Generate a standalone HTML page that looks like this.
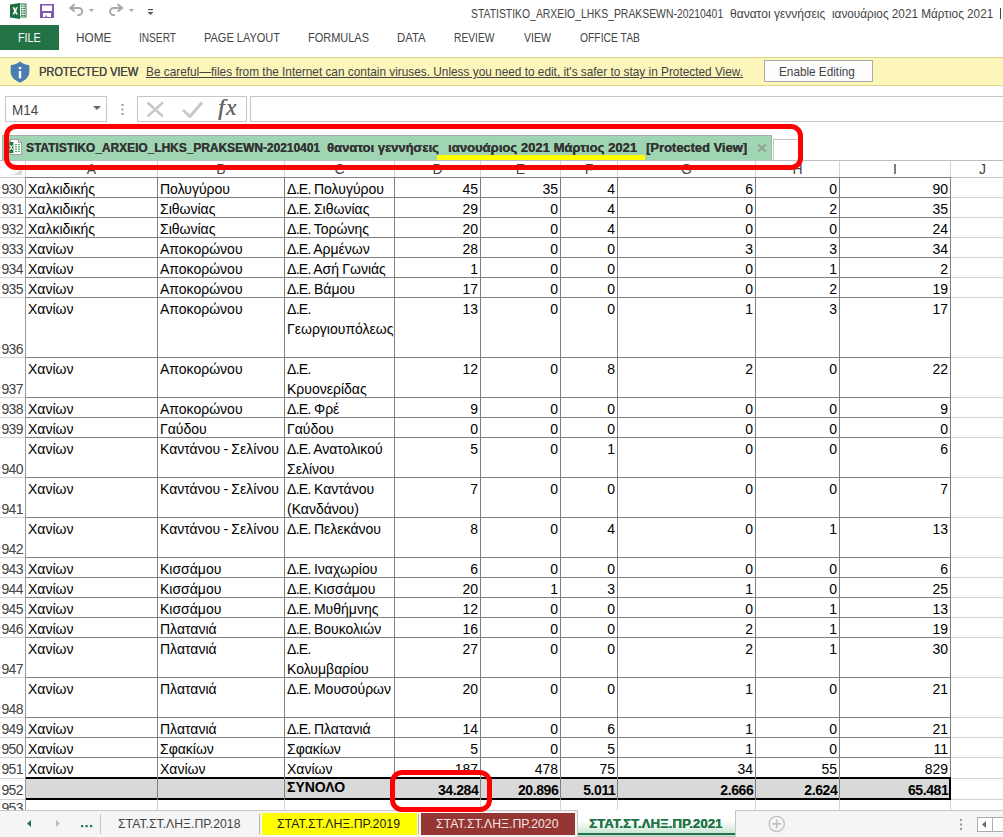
<!DOCTYPE html>
<html><head><meta charset="utf-8">
<style>
*{margin:0;padding:0;box-sizing:border-box}
html,body{width:1003px;height:837px;overflow:hidden;background:#fff;font-family:"Liberation Sans",sans-serif}
body{position:relative}
.a{position:absolute;white-space:pre}
.c{position:absolute;font-size:14px;color:#000;white-space:pre;line-height:20px;word-spacing:-0.6px}
.n{position:absolute;font-size:14px;color:#000;white-space:pre;line-height:20px;text-align:right}
.rh{position:absolute;font-size:14px;color:#444;left:0;width:23px;text-align:right;line-height:14px;letter-spacing:-0.6px}
.ch{position:absolute;font-size:14px;color:#444;top:162px;text-align:center;line-height:14px}
</style></head><body>

<svg class="a" style="left:10px;top:3px" width="17" height="16" viewBox="0 0 17 16">
<rect x="9.5" y="1" width="6.5" height="13" fill="#fff" stroke="#1d6f42" stroke-width="1"/>
<g fill="#1d6f42"><rect x="11" y="2.5" width="1.6" height="1.3"/><rect x="13.3" y="2.5" width="1.6" height="1.3"/><rect x="11" y="4.8" width="1.6" height="1.3"/><rect x="13.3" y="4.8" width="1.6" height="1.3"/><rect x="11" y="7.1" width="1.6" height="1.3"/><rect x="13.3" y="7.1" width="1.6" height="1.3"/><rect x="11" y="9.4" width="1.6" height="1.3"/><rect x="13.3" y="9.4" width="1.6" height="1.3"/><rect x="11" y="11.7" width="1.6" height="1.3"/><rect x="13.3" y="11.7" width="1.6" height="1.3"/></g>
<polygon points="0,1.5 10,0 10,16 0,14.5" fill="#1d6f42"/>
<path d="M2.6,4.2 H4.4 L5.2,6.4 L6,4.2 H7.8 L6.2,7.9 L7.9,11.6 H6.1 L5.2,9.4 L4.3,11.6 H2.5 L4.2,7.9Z" fill="#fff"/>
</svg>
<svg class="a" style="left:40px;top:4px" width="15" height="15" viewBox="0 0 15 15">
<path d="M0,0H14V14H0Z M2,1.5V7H12V1.5Z M3,9V13H5.5V11.5H7V13H11V9Z" fill="#8256b4" fill-rule="evenodd"/>
</svg>
<svg class="a" style="left:68px;top:3px" width="90" height="16" viewBox="0 0 90 16">
<g fill="none" stroke="#a8a8a8" stroke-width="2" stroke-linecap="butt">
<path d="M2.5,4.9 H10.6 A3.6,3.6 0 0 1 10.6,12.1 H9.4"/>
<path d="M6.7,1.2 L2.2,4.9 L6.7,8.6"/>
<path d="M53.8,4.9 H45.7 A3.6,3.6 0 0 0 45.7,12.1 H46.9"/>
<path d="M49.6,1.2 L54.1,4.9 L49.6,8.6"/>
</g>
<polygon points="21,6 26,6 23.5,9" fill="#a6a6a6"/>
<polygon points="61,6 66,6 63.5,9" fill="#a6a6a6"/>
<rect x="80" y="6" width="5" height="1.2" fill="#555"/>
<polygon points="79.5,9 85.5,9 82.5,12" fill="#555"/>
</svg>
<div class="a" style="left:1000px;top:8px;width:1px;height:11px;background:#444"></div>
<div class="a" style="left:0;top:25px;width:59px;height:25px;background:#217346"></div>
<div class="a" style="left:0;top:57px;width:1003px;height:29px;background:#fcf6bb;border-top:1px solid #dcd68c;border-bottom:1px solid #dcd68c"></div>
<svg class="a" style="left:10px;top:61px" width="20" height="22" viewBox="0 0 20 22">
<path d="M10,0.5 C7.5,2.5 4,4 0.7,4.3 V11 C0.7,16 5,19.5 10,21.7 C15,19.5 19.3,16 19.3,11 V4.3 C16,4 12.5,2.5 10,0.5Z" fill="#4a7db4"/>
<rect x="8.8" y="6" width="2.4" height="2.2" fill="#fff"/>
<rect x="8.8" y="10" width="2.4" height="7.3" fill="#fff"/>
</svg>
<div class="a" style="left:764px;top:60px;width:109px;height:22px;background:#fdfdfd;border:1px solid #ababab"></div>
<div class="a" style="left:5px;top:96px;width:102px;height:26px;border:1px solid #c6c6c6;background:#fff"></div>
<svg class="a" style="left:93px;top:106px" width="8" height="4"><polygon points="0,0 8,0 4,4" fill="#666"/></svg>
<svg class="a" style="left:121px;top:104px" width="3" height="11"><rect x="0.5" y="0" width="2" height="2" fill="#999"/><rect x="0.5" y="4.5" width="2" height="2" fill="#999"/><rect x="0.5" y="9" width="2" height="2" fill="#999"/></svg>
<div class="a" style="left:137px;top:96px;width:110px;height:26px;border:1px solid #c6c6c6;background:#fff"></div>
<svg class="a" style="left:146px;top:101px" width="60" height="17" viewBox="0 0 60 17">
<path d="M1.5,1.5 L17,15.5 M17,1.5 L1.5,15.5" stroke="#c8c8c8" stroke-width="2.4" fill="none"/>
<path d="M37,9 L44,15.5 L56,1.5" stroke="#c8c8c8" stroke-width="3" fill="none"/>
</svg>
<div class="a" style="left:218px;top:97px;font-family:'Liberation Serif',serif;font-style:italic;font-weight:normal;font-size:23px;line-height:22px;color:#666;letter-spacing:1.5px;text-shadow:0.4px 0 0 #666">fx</div>
<div class="a" style="left:250px;top:96px;width:760px;height:26px;border:1px solid #c6c6c6;background:#fff"></div>
<div class="ch" style="left:26px;width:131px">A</div>
<div class="ch" style="left:158px;width:126px">B</div>
<div class="ch" style="left:285px;width:109px">C</div>
<div class="ch" style="left:395px;width:85px">D</div>
<div class="ch" style="left:481px;width:79px">E</div>
<div class="ch" style="left:561px;width:56px">F</div>
<div class="ch" style="left:618px;width:137px">G</div>
<div class="ch" style="left:756px;width:83px">H</div>
<div class="ch" style="left:840px;width:110px">I</div>
<div class="ch" style="left:951px;width:63px">J</div>
<div class="a" style="left:25px;top:161px;width:1px;height:16px;background:#d4d4d4"></div>
<div class="a" style="left:157px;top:161px;width:1px;height:16px;background:#d4d4d4"></div>
<div class="a" style="left:284px;top:161px;width:1px;height:16px;background:#d4d4d4"></div>
<div class="a" style="left:394px;top:161px;width:1px;height:16px;background:#d4d4d4"></div>
<div class="a" style="left:480px;top:161px;width:1px;height:16px;background:#d4d4d4"></div>
<div class="a" style="left:560px;top:161px;width:1px;height:16px;background:#d4d4d4"></div>
<div class="a" style="left:617px;top:161px;width:1px;height:16px;background:#d4d4d4"></div>
<div class="a" style="left:755px;top:161px;width:1px;height:16px;background:#d4d4d4"></div>
<div class="a" style="left:839px;top:161px;width:1px;height:16px;background:#d4d4d4"></div>
<div class="a" style="left:950px;top:161px;width:1px;height:16px;background:#d4d4d4"></div>
<div class="a" style="left:0;top:177px;width:1003px;height:1px;background:#c6c6c6"></div>
<div class="rh" style="top:182px">930</div>
<div class="a" style="left:0;top:197px;width:25px;height:1px;background:#d4d4d4"></div>
<div class="c" style="left:28px;top:179px">Χαλκιδικής</div>
<div class="c" style="left:160px;top:179px">Πολυγύρου</div>
<div class="c" style="left:287px;top:179px"><span style="letter-spacing:-0.7px">Δ.Ε.</span> Πολυγύρου</div>
<div class="n" style="left:394px;width:84px;top:179px">45</div>
<div class="n" style="left:480px;width:78px;top:179px">35</div>
<div class="n" style="left:560px;width:55px;top:179px">4</div>
<div class="n" style="left:617px;width:136px;top:179px">6</div>
<div class="n" style="left:755px;width:82px;top:179px">0</div>
<div class="n" style="left:839px;width:109px;top:179px">90</div>
<div class="a" style="left:950px;top:197px;width:53px;height:1px;background:#d4d4d4"></div>
<div class="rh" style="top:202px">931</div>
<div class="a" style="left:0;top:217px;width:25px;height:1px;background:#d4d4d4"></div>
<div class="c" style="left:28px;top:199px">Χαλκιδικής</div>
<div class="c" style="left:160px;top:199px">Σιθωνίας</div>
<div class="c" style="left:287px;top:199px"><span style="letter-spacing:-0.7px">Δ.Ε.</span> Σιθωνίας</div>
<div class="n" style="left:394px;width:84px;top:199px">29</div>
<div class="n" style="left:480px;width:78px;top:199px">0</div>
<div class="n" style="left:560px;width:55px;top:199px">4</div>
<div class="n" style="left:617px;width:136px;top:199px">0</div>
<div class="n" style="left:755px;width:82px;top:199px">2</div>
<div class="n" style="left:839px;width:109px;top:199px">35</div>
<div class="a" style="left:950px;top:217px;width:53px;height:1px;background:#d4d4d4"></div>
<div class="rh" style="top:222px">932</div>
<div class="a" style="left:0;top:237px;width:25px;height:1px;background:#d4d4d4"></div>
<div class="c" style="left:28px;top:219px">Χαλκιδικής</div>
<div class="c" style="left:160px;top:219px">Σιθωνίας</div>
<div class="c" style="left:287px;top:219px"><span style="letter-spacing:-0.7px">Δ.Ε.</span> Τορώνης</div>
<div class="n" style="left:394px;width:84px;top:219px">20</div>
<div class="n" style="left:480px;width:78px;top:219px">0</div>
<div class="n" style="left:560px;width:55px;top:219px">4</div>
<div class="n" style="left:617px;width:136px;top:219px">0</div>
<div class="n" style="left:755px;width:82px;top:219px">0</div>
<div class="n" style="left:839px;width:109px;top:219px">24</div>
<div class="a" style="left:950px;top:237px;width:53px;height:1px;background:#d4d4d4"></div>
<div class="rh" style="top:242px">933</div>
<div class="a" style="left:0;top:257px;width:25px;height:1px;background:#d4d4d4"></div>
<div class="c" style="left:28px;top:239px">Χανίων</div>
<div class="c" style="left:160px;top:239px">Αποκορώνου</div>
<div class="c" style="left:287px;top:239px"><span style="letter-spacing:-0.7px">Δ.Ε.</span> Αρμένων</div>
<div class="n" style="left:394px;width:84px;top:239px">28</div>
<div class="n" style="left:480px;width:78px;top:239px">0</div>
<div class="n" style="left:560px;width:55px;top:239px">0</div>
<div class="n" style="left:617px;width:136px;top:239px">3</div>
<div class="n" style="left:755px;width:82px;top:239px">3</div>
<div class="n" style="left:839px;width:109px;top:239px">34</div>
<div class="a" style="left:950px;top:257px;width:53px;height:1px;background:#d4d4d4"></div>
<div class="rh" style="top:262px">934</div>
<div class="a" style="left:0;top:277px;width:25px;height:1px;background:#d4d4d4"></div>
<div class="c" style="left:28px;top:259px">Χανίων</div>
<div class="c" style="left:160px;top:259px">Αποκορώνου</div>
<div class="c" style="left:287px;top:259px"><span style="letter-spacing:-0.7px">Δ.Ε.</span> Ασή Γωνιάς</div>
<div class="n" style="left:394px;width:84px;top:259px">1</div>
<div class="n" style="left:480px;width:78px;top:259px">0</div>
<div class="n" style="left:560px;width:55px;top:259px">0</div>
<div class="n" style="left:617px;width:136px;top:259px">0</div>
<div class="n" style="left:755px;width:82px;top:259px">1</div>
<div class="n" style="left:839px;width:109px;top:259px">2</div>
<div class="a" style="left:950px;top:277px;width:53px;height:1px;background:#d4d4d4"></div>
<div class="rh" style="top:282px">935</div>
<div class="a" style="left:0;top:297px;width:25px;height:1px;background:#d4d4d4"></div>
<div class="c" style="left:28px;top:279px">Χανίων</div>
<div class="c" style="left:160px;top:279px">Αποκορώνου</div>
<div class="c" style="left:287px;top:279px"><span style="letter-spacing:-0.7px">Δ.Ε.</span> Βάμου</div>
<div class="n" style="left:394px;width:84px;top:279px">17</div>
<div class="n" style="left:480px;width:78px;top:279px">0</div>
<div class="n" style="left:560px;width:55px;top:279px">0</div>
<div class="n" style="left:617px;width:136px;top:279px">0</div>
<div class="n" style="left:755px;width:82px;top:279px">2</div>
<div class="n" style="left:839px;width:109px;top:279px">19</div>
<div class="a" style="left:950px;top:297px;width:53px;height:1px;background:#d4d4d4"></div>
<div class="rh" style="top:342px">936</div>
<div class="a" style="left:0;top:357px;width:25px;height:1px;background:#d4d4d4"></div>
<div class="c" style="left:28px;top:299px">Χανίων</div>
<div class="c" style="left:160px;top:299px">Αποκορώνου</div>
<div class="c" style="left:287px;top:299px"><span style="letter-spacing:-0.7px">Δ.Ε.</span><br>Γεωργιουπόλεως</div>
<div class="n" style="left:394px;width:84px;top:299px">13</div>
<div class="n" style="left:480px;width:78px;top:299px">0</div>
<div class="n" style="left:560px;width:55px;top:299px">0</div>
<div class="n" style="left:617px;width:136px;top:299px">1</div>
<div class="n" style="left:755px;width:82px;top:299px">3</div>
<div class="n" style="left:839px;width:109px;top:299px">17</div>
<div class="a" style="left:950px;top:357px;width:53px;height:1px;background:#d4d4d4"></div>
<div class="rh" style="top:382px">937</div>
<div class="a" style="left:0;top:397px;width:25px;height:1px;background:#d4d4d4"></div>
<div class="c" style="left:28px;top:359px">Χανίων</div>
<div class="c" style="left:160px;top:359px">Αποκορώνου</div>
<div class="c" style="left:287px;top:359px"><span style="letter-spacing:-0.7px">Δ.Ε.</span><br>Κρυονερίδας</div>
<div class="n" style="left:394px;width:84px;top:359px">12</div>
<div class="n" style="left:480px;width:78px;top:359px">0</div>
<div class="n" style="left:560px;width:55px;top:359px">8</div>
<div class="n" style="left:617px;width:136px;top:359px">2</div>
<div class="n" style="left:755px;width:82px;top:359px">0</div>
<div class="n" style="left:839px;width:109px;top:359px">22</div>
<div class="a" style="left:950px;top:397px;width:53px;height:1px;background:#d4d4d4"></div>
<div class="rh" style="top:402px">938</div>
<div class="a" style="left:0;top:417px;width:25px;height:1px;background:#d4d4d4"></div>
<div class="c" style="left:28px;top:399px">Χανίων</div>
<div class="c" style="left:160px;top:399px">Αποκορώνου</div>
<div class="c" style="left:287px;top:399px"><span style="letter-spacing:-0.7px">Δ.Ε.</span> Φρέ</div>
<div class="n" style="left:394px;width:84px;top:399px">9</div>
<div class="n" style="left:480px;width:78px;top:399px">0</div>
<div class="n" style="left:560px;width:55px;top:399px">0</div>
<div class="n" style="left:617px;width:136px;top:399px">0</div>
<div class="n" style="left:755px;width:82px;top:399px">0</div>
<div class="n" style="left:839px;width:109px;top:399px">9</div>
<div class="a" style="left:950px;top:417px;width:53px;height:1px;background:#d4d4d4"></div>
<div class="rh" style="top:422px">939</div>
<div class="a" style="left:0;top:437px;width:25px;height:1px;background:#d4d4d4"></div>
<div class="c" style="left:28px;top:419px">Χανίων</div>
<div class="c" style="left:160px;top:419px">Γαύδου</div>
<div class="c" style="left:287px;top:419px">Γαύδου</div>
<div class="n" style="left:394px;width:84px;top:419px">0</div>
<div class="n" style="left:480px;width:78px;top:419px">0</div>
<div class="n" style="left:560px;width:55px;top:419px">0</div>
<div class="n" style="left:617px;width:136px;top:419px">0</div>
<div class="n" style="left:755px;width:82px;top:419px">0</div>
<div class="n" style="left:839px;width:109px;top:419px">0</div>
<div class="a" style="left:950px;top:437px;width:53px;height:1px;background:#d4d4d4"></div>
<div class="rh" style="top:462px">940</div>
<div class="a" style="left:0;top:477px;width:25px;height:1px;background:#d4d4d4"></div>
<div class="c" style="left:28px;top:439px">Χανίων</div>
<div class="c" style="left:160px;top:439px">Καντάνου - Σελίνου</div>
<div class="c" style="left:287px;top:439px"><span style="letter-spacing:-0.7px">Δ.Ε.</span> Ανατολικού<br>Σελίνου</div>
<div class="n" style="left:394px;width:84px;top:439px">5</div>
<div class="n" style="left:480px;width:78px;top:439px">0</div>
<div class="n" style="left:560px;width:55px;top:439px">1</div>
<div class="n" style="left:617px;width:136px;top:439px">0</div>
<div class="n" style="left:755px;width:82px;top:439px">0</div>
<div class="n" style="left:839px;width:109px;top:439px">6</div>
<div class="a" style="left:950px;top:477px;width:53px;height:1px;background:#d4d4d4"></div>
<div class="rh" style="top:502px">941</div>
<div class="a" style="left:0;top:517px;width:25px;height:1px;background:#d4d4d4"></div>
<div class="c" style="left:28px;top:479px">Χανίων</div>
<div class="c" style="left:160px;top:479px">Καντάνου - Σελίνου</div>
<div class="c" style="left:287px;top:479px"><span style="letter-spacing:-0.7px">Δ.Ε.</span> Καντάνου<br>(Κανδάνου)</div>
<div class="n" style="left:394px;width:84px;top:479px">7</div>
<div class="n" style="left:480px;width:78px;top:479px">0</div>
<div class="n" style="left:560px;width:55px;top:479px">0</div>
<div class="n" style="left:617px;width:136px;top:479px">0</div>
<div class="n" style="left:755px;width:82px;top:479px">0</div>
<div class="n" style="left:839px;width:109px;top:479px">7</div>
<div class="a" style="left:950px;top:517px;width:53px;height:1px;background:#d4d4d4"></div>
<div class="rh" style="top:542px">942</div>
<div class="a" style="left:0;top:557px;width:25px;height:1px;background:#d4d4d4"></div>
<div class="c" style="left:28px;top:519px">Χανίων</div>
<div class="c" style="left:160px;top:519px">Καντάνου - Σελίνου</div>
<div class="c" style="left:287px;top:519px"><span style="letter-spacing:-0.7px">Δ.Ε.</span> Πελεκάνου</div>
<div class="n" style="left:394px;width:84px;top:519px">8</div>
<div class="n" style="left:480px;width:78px;top:519px">0</div>
<div class="n" style="left:560px;width:55px;top:519px">4</div>
<div class="n" style="left:617px;width:136px;top:519px">0</div>
<div class="n" style="left:755px;width:82px;top:519px">1</div>
<div class="n" style="left:839px;width:109px;top:519px">13</div>
<div class="a" style="left:950px;top:557px;width:53px;height:1px;background:#d4d4d4"></div>
<div class="rh" style="top:562px">943</div>
<div class="a" style="left:0;top:577px;width:25px;height:1px;background:#d4d4d4"></div>
<div class="c" style="left:28px;top:559px">Χανίων</div>
<div class="c" style="left:160px;top:559px">Κισσάμου</div>
<div class="c" style="left:287px;top:559px"><span style="letter-spacing:-0.7px">Δ.Ε.</span> Ιναχωρίου</div>
<div class="n" style="left:394px;width:84px;top:559px">6</div>
<div class="n" style="left:480px;width:78px;top:559px">0</div>
<div class="n" style="left:560px;width:55px;top:559px">0</div>
<div class="n" style="left:617px;width:136px;top:559px">0</div>
<div class="n" style="left:755px;width:82px;top:559px">0</div>
<div class="n" style="left:839px;width:109px;top:559px">6</div>
<div class="a" style="left:950px;top:577px;width:53px;height:1px;background:#d4d4d4"></div>
<div class="rh" style="top:582px">944</div>
<div class="a" style="left:0;top:597px;width:25px;height:1px;background:#d4d4d4"></div>
<div class="c" style="left:28px;top:579px">Χανίων</div>
<div class="c" style="left:160px;top:579px">Κισσάμου</div>
<div class="c" style="left:287px;top:579px"><span style="letter-spacing:-0.7px">Δ.Ε.</span> Κισσάμου</div>
<div class="n" style="left:394px;width:84px;top:579px">20</div>
<div class="n" style="left:480px;width:78px;top:579px">1</div>
<div class="n" style="left:560px;width:55px;top:579px">3</div>
<div class="n" style="left:617px;width:136px;top:579px">1</div>
<div class="n" style="left:755px;width:82px;top:579px">0</div>
<div class="n" style="left:839px;width:109px;top:579px">25</div>
<div class="a" style="left:950px;top:597px;width:53px;height:1px;background:#d4d4d4"></div>
<div class="rh" style="top:602px">945</div>
<div class="a" style="left:0;top:617px;width:25px;height:1px;background:#d4d4d4"></div>
<div class="c" style="left:28px;top:599px">Χανίων</div>
<div class="c" style="left:160px;top:599px">Κισσάμου</div>
<div class="c" style="left:287px;top:599px"><span style="letter-spacing:-0.7px">Δ.Ε.</span> Μυθήμνης</div>
<div class="n" style="left:394px;width:84px;top:599px">12</div>
<div class="n" style="left:480px;width:78px;top:599px">0</div>
<div class="n" style="left:560px;width:55px;top:599px">0</div>
<div class="n" style="left:617px;width:136px;top:599px">0</div>
<div class="n" style="left:755px;width:82px;top:599px">1</div>
<div class="n" style="left:839px;width:109px;top:599px">13</div>
<div class="a" style="left:950px;top:617px;width:53px;height:1px;background:#d4d4d4"></div>
<div class="rh" style="top:622px">946</div>
<div class="a" style="left:0;top:637px;width:25px;height:1px;background:#d4d4d4"></div>
<div class="c" style="left:28px;top:619px">Χανίων</div>
<div class="c" style="left:160px;top:619px">Πλατανιά</div>
<div class="c" style="left:287px;top:619px"><span style="letter-spacing:-0.7px">Δ.Ε.</span> Βουκολιών</div>
<div class="n" style="left:394px;width:84px;top:619px">16</div>
<div class="n" style="left:480px;width:78px;top:619px">0</div>
<div class="n" style="left:560px;width:55px;top:619px">0</div>
<div class="n" style="left:617px;width:136px;top:619px">2</div>
<div class="n" style="left:755px;width:82px;top:619px">1</div>
<div class="n" style="left:839px;width:109px;top:619px">19</div>
<div class="a" style="left:950px;top:637px;width:53px;height:1px;background:#d4d4d4"></div>
<div class="rh" style="top:662px">947</div>
<div class="a" style="left:0;top:677px;width:25px;height:1px;background:#d4d4d4"></div>
<div class="c" style="left:28px;top:639px">Χανίων</div>
<div class="c" style="left:160px;top:639px">Πλατανιά</div>
<div class="c" style="left:287px;top:639px"><span style="letter-spacing:-0.7px">Δ.Ε.</span><br>Κολυμβαρίου</div>
<div class="n" style="left:394px;width:84px;top:639px">27</div>
<div class="n" style="left:480px;width:78px;top:639px">0</div>
<div class="n" style="left:560px;width:55px;top:639px">0</div>
<div class="n" style="left:617px;width:136px;top:639px">2</div>
<div class="n" style="left:755px;width:82px;top:639px">1</div>
<div class="n" style="left:839px;width:109px;top:639px">30</div>
<div class="a" style="left:950px;top:677px;width:53px;height:1px;background:#d4d4d4"></div>
<div class="rh" style="top:702px">948</div>
<div class="a" style="left:0;top:717px;width:25px;height:1px;background:#d4d4d4"></div>
<div class="c" style="left:28px;top:679px">Χανίων</div>
<div class="c" style="left:160px;top:679px">Πλατανιά</div>
<div class="c" style="left:287px;top:679px"><span style="letter-spacing:-0.7px">Δ.Ε.</span> Μουσούρων</div>
<div class="n" style="left:394px;width:84px;top:679px">20</div>
<div class="n" style="left:480px;width:78px;top:679px">0</div>
<div class="n" style="left:560px;width:55px;top:679px">0</div>
<div class="n" style="left:617px;width:136px;top:679px">1</div>
<div class="n" style="left:755px;width:82px;top:679px">0</div>
<div class="n" style="left:839px;width:109px;top:679px">21</div>
<div class="a" style="left:950px;top:717px;width:53px;height:1px;background:#d4d4d4"></div>
<div class="rh" style="top:722px">949</div>
<div class="a" style="left:0;top:737px;width:25px;height:1px;background:#d4d4d4"></div>
<div class="c" style="left:28px;top:719px">Χανίων</div>
<div class="c" style="left:160px;top:719px">Πλατανιά</div>
<div class="c" style="left:287px;top:719px"><span style="letter-spacing:-0.7px">Δ.Ε.</span> Πλατανιά</div>
<div class="n" style="left:394px;width:84px;top:719px">14</div>
<div class="n" style="left:480px;width:78px;top:719px">0</div>
<div class="n" style="left:560px;width:55px;top:719px">6</div>
<div class="n" style="left:617px;width:136px;top:719px">1</div>
<div class="n" style="left:755px;width:82px;top:719px">0</div>
<div class="n" style="left:839px;width:109px;top:719px">21</div>
<div class="a" style="left:950px;top:737px;width:53px;height:1px;background:#d4d4d4"></div>
<div class="rh" style="top:742px">950</div>
<div class="a" style="left:0;top:757px;width:25px;height:1px;background:#d4d4d4"></div>
<div class="c" style="left:28px;top:739px">Χανίων</div>
<div class="c" style="left:160px;top:739px">Σφακίων</div>
<div class="c" style="left:287px;top:739px">Σφακίων</div>
<div class="n" style="left:394px;width:84px;top:739px">5</div>
<div class="n" style="left:480px;width:78px;top:739px">0</div>
<div class="n" style="left:560px;width:55px;top:739px">5</div>
<div class="n" style="left:617px;width:136px;top:739px">1</div>
<div class="n" style="left:755px;width:82px;top:739px">0</div>
<div class="n" style="left:839px;width:109px;top:739px">11</div>
<div class="a" style="left:950px;top:757px;width:53px;height:1px;background:#d4d4d4"></div>
<div class="rh" style="top:762px">951</div>
<div class="a" style="left:0;top:778px;width:25px;height:1px;background:#d4d4d4"></div>
<div class="c" style="left:28px;top:759px">Χανίων</div>
<div class="c" style="left:160px;top:759px">Χανίων</div>
<div class="c" style="left:287px;top:759px">Χανίων</div>
<div class="n" style="left:394px;width:84px;top:759px">187</div>
<div class="n" style="left:480px;width:78px;top:759px">478</div>
<div class="n" style="left:560px;width:55px;top:759px">75</div>
<div class="n" style="left:617px;width:136px;top:759px">34</div>
<div class="n" style="left:755px;width:82px;top:759px">55</div>
<div class="n" style="left:839px;width:109px;top:759px">829</div>
<div class="a" style="left:950px;top:778px;width:53px;height:1px;background:#d4d4d4"></div>
<div class="a" style="left:25px;top:197px;width:926px;height:1px;background:#808080"></div>
<div class="a" style="left:25px;top:217px;width:926px;height:1px;background:#808080"></div>
<div class="a" style="left:25px;top:237px;width:926px;height:1px;background:#808080"></div>
<div class="a" style="left:25px;top:257px;width:926px;height:1px;background:#808080"></div>
<div class="a" style="left:25px;top:277px;width:926px;height:1px;background:#808080"></div>
<div class="a" style="left:25px;top:297px;width:926px;height:1px;background:#808080"></div>
<div class="a" style="left:25px;top:357px;width:926px;height:1px;background:#808080"></div>
<div class="a" style="left:25px;top:397px;width:926px;height:1px;background:#808080"></div>
<div class="a" style="left:25px;top:417px;width:926px;height:1px;background:#808080"></div>
<div class="a" style="left:25px;top:437px;width:926px;height:1px;background:#808080"></div>
<div class="a" style="left:25px;top:477px;width:926px;height:1px;background:#808080"></div>
<div class="a" style="left:25px;top:517px;width:926px;height:1px;background:#808080"></div>
<div class="a" style="left:25px;top:557px;width:926px;height:1px;background:#808080"></div>
<div class="a" style="left:25px;top:577px;width:926px;height:1px;background:#808080"></div>
<div class="a" style="left:25px;top:597px;width:926px;height:1px;background:#808080"></div>
<div class="a" style="left:25px;top:617px;width:926px;height:1px;background:#808080"></div>
<div class="a" style="left:25px;top:637px;width:926px;height:1px;background:#808080"></div>
<div class="a" style="left:25px;top:677px;width:926px;height:1px;background:#808080"></div>
<div class="a" style="left:25px;top:717px;width:926px;height:1px;background:#808080"></div>
<div class="a" style="left:25px;top:737px;width:926px;height:1px;background:#808080"></div>
<div class="a" style="left:25px;top:757px;width:926px;height:1px;background:#808080"></div>
<div class="a" style="left:25px;top:177px;width:926px;height:1px;background:#808080"></div>
<div class="a" style="left:26px;top:779px;width:925px;height:19px;background:#d9d9d9"></div>
<div class="a" style="left:26px;top:777px;width:925px;height:2px;background:#000"></div>
<div class="a" style="left:26px;top:798px;width:925px;height:2px;background:#000"></div>
<div class="rh" style="top:783px">952</div>
<div class="a" style="left:0;top:799px;width:25px;height:1px;background:#d4d4d4"></div>
<div class="rh" style="top:801px">953</div>
<div class="c" style="left:287px;top:777px;font-weight:bold">ΣΥΝΟΛΟ</div>
<div class="n" style="left:394px;width:84.4px;top:780px;font-weight:bold;letter-spacing:-0.4px">34.284</div>
<div class="n" style="left:480px;width:78.4px;top:780px;font-weight:bold;letter-spacing:-0.4px">20.896</div>
<div class="n" style="left:560px;width:55.4px;top:780px;font-weight:bold;letter-spacing:-0.4px">5.011</div>
<div class="n" style="left:617px;width:136.4px;top:780px;font-weight:bold;letter-spacing:-0.4px">2.666</div>
<div class="n" style="left:755px;width:82.4px;top:780px;font-weight:bold;letter-spacing:-0.4px">2.624</div>
<div class="n" style="left:839px;width:109.4px;top:780px;font-weight:bold;letter-spacing:-0.4px">65.481</div>
<div class="a" style="left:950px;top:799px;width:53px;height:1px;background:#d4d4d4"></div>
<div class="a" style="left:25px;top:177px;width:1px;height:633px;background:#9b9b9b"></div>
<div class="a" style="left:157px;top:177px;width:1px;height:623px;background:#808080"></div>
<div class="a" style="left:157px;top:800px;width:1px;height:10px;background:#d4d4d4"></div>
<div class="a" style="left:284px;top:177px;width:1px;height:623px;background:#808080"></div>
<div class="a" style="left:284px;top:800px;width:1px;height:10px;background:#d4d4d4"></div>
<div class="a" style="left:394px;top:177px;width:1px;height:623px;background:#808080"></div>
<div class="a" style="left:394px;top:800px;width:1px;height:10px;background:#d4d4d4"></div>
<div class="a" style="left:480px;top:177px;width:1px;height:623px;background:#808080"></div>
<div class="a" style="left:480px;top:800px;width:1px;height:10px;background:#d4d4d4"></div>
<div class="a" style="left:560px;top:177px;width:1px;height:623px;background:#808080"></div>
<div class="a" style="left:560px;top:800px;width:1px;height:10px;background:#d4d4d4"></div>
<div class="a" style="left:617px;top:177px;width:1px;height:623px;background:#808080"></div>
<div class="a" style="left:617px;top:800px;width:1px;height:10px;background:#d4d4d4"></div>
<div class="a" style="left:755px;top:177px;width:1px;height:623px;background:#808080"></div>
<div class="a" style="left:755px;top:800px;width:1px;height:10px;background:#d4d4d4"></div>
<div class="a" style="left:839px;top:177px;width:1px;height:623px;background:#808080"></div>
<div class="a" style="left:839px;top:800px;width:1px;height:10px;background:#d4d4d4"></div>
<div class="a" style="left:950px;top:177px;width:1px;height:623px;background:#808080"></div>
<div class="a" style="left:950px;top:800px;width:1px;height:10px;background:#d4d4d4"></div>
<div class="a" style="left:949px;top:777px;width:2px;height:23px;background:#000"></div>
<svg class="a" style="left:13px;top:169px" width="9" height="6"><polygon points="9,0 9,6 0,6" fill="#dadada"/></svg>
<div class="a" style="left:0;top:160px;width:1003px;height:1px;background:#bdbdbd"></div>
<div class="a" style="left:2px;top:135px;width:770px;height:25px;background:#a0d5b4;border:1px solid #ababab;border-bottom:none"></div>
<svg class="a" style="left:9px;top:139px" width="14" height="17" viewBox="0 0 14 17">
<path d="M1.5,0.5 H9.5 L12.5,3.5 V15.5 H1.5Z" fill="#fff" stroke="#a0a0a0" stroke-width="1"/>
<path d="M9.5,0.5 V3.5 H12.5" fill="none" stroke="#a0a0a0" stroke-width="1"/>
<g fill="#52a86e"><rect x="6" y="5" width="2" height="1.2"/><rect x="9" y="5" width="2" height="1.2"/><rect x="6" y="7.3" width="2" height="1.2"/><rect x="9" y="7.3" width="2" height="1.2"/><rect x="6" y="9.6" width="2" height="1.2"/><rect x="9" y="9.6" width="2" height="1.2"/><rect x="6" y="11.9" width="2" height="1.2"/><rect x="9" y="11.9" width="2" height="1.2"/></g>
<rect x="0.4" y="3" width="4" height="11" fill="#1f7a46"/>
<path d="M0.8,6 L3.6,11 M3.6,6 L0.8,11" stroke="#fff" stroke-width="1"/>
</svg>
<div class="a" style="left:437px;top:155px;width:208px;height:5px;background:#ffff00"></div>
<svg class="a" style="left:757px;top:144px" width="10" height="8"><path d="M1.2,0.6 L8.8,7.4 M8.8,0.6 L1.2,7.4" stroke="#9c9c9c" stroke-width="2"/></svg>
<div class="a" style="left:773px;top:139px;width:28px;height:21px;background:#fff;border:1px solid #c6c6c6;border-bottom:none"></div>
<div class="a" style="left:4px;top:124px;width:799px;height:46px;border:5px solid #ff0000;border-radius:12px"></div>
<div class="a" style="left:0;top:810px;width:1003px;height:27px;background:#f5f5f5;border-top:1px solid #c6c6c6"></div>
<svg class="a" style="left:27px;top:820px" width="35" height="8"><polygon points="4,0 4,7 0,3.5" fill="#217346"/><polygon points="29,0 29,7 33,3.5" fill="#bdbdbd"/></svg>
<svg class="a" style="left:81px;top:825px" width="12" height="3"><rect x="0" y="0" width="2.2" height="2.2" fill="#217346"/><rect x="4.5" y="0" width="2.2" height="2.2" fill="#217346"/><rect x="9" y="0" width="2.2" height="2.2" fill="#217346"/></svg>
<div class="a" style="left:100px;top:814px;width:1px;height:20px;background:#c6c6c6"></div>
<div class="a" style="left:259px;top:814px;width:1px;height:20px;background:#b4b4b4"></div>
<div class="a" style="left:418px;top:814px;width:1px;height:20px;background:#b4b4b4"></div>
<div class="a" style="left:262px;top:813px;width:155px;height:22px;background:#ffff00"></div>
<div class="a" style="left:421px;top:813px;width:154px;height:22px;background:#953634"></div>
<div class="a" style="left:577px;top:810px;width:159px;height:27px;background:linear-gradient(#fff,#fff 40%,#bfe2cb);border:1px solid #c6c6c6;border-top:none"></div>
<div class="a" style="left:578px;top:833px;width:157px;height:2px;background:#217346"></div>
<svg class="a" style="left:768px;top:815px" width="18" height="18"><circle cx="8.7" cy="8.9" r="7.6" fill="none" stroke="#c0c0c0" stroke-width="1.3"/><path d="M8.7,4.5V13.3M4.3,8.9H13.1" stroke="#c0c0c0" stroke-width="1.6"/></svg>
<svg class="a" style="left:960px;top:819px" width="3" height="11"><rect x="0" y="0" width="2" height="2" fill="#999"/><rect x="0" y="4.5" width="2" height="2" fill="#999"/><rect x="0" y="9" width="2" height="2" fill="#999"/></svg>
<div class="a" style="left:977px;top:817px;width:16px;height:15px;background:#fff;border:1px solid #ababab"></div>
<div class="a" style="left:992px;top:817px;width:16px;height:15px;background:#fff;border:1px solid #ababab"></div>
<svg class="a" style="left:982px;top:821px" width="5" height="7"><polygon points="4,0 4,7 0,3.5" fill="#6a6a6a"/></svg>
<div class="a" style="left:471.00px;top:6.51px;font-size:13px;line-height:13px;color:#444;font-weight:400;transform:scaleX(0.7999);transform-origin:0 0;">STATISTIKO_ARXEIO_LHKS_PRAKSEWN-20210401</div>
<div class="a" style="left:730.00px;top:6.51px;font-size:13px;line-height:13px;color:#444;font-weight:400;transform:scaleX(0.9253);transform-origin:0 0;">θανατοι γεννήσεις</div>
<div class="a" style="left:832.40px;top:6.51px;font-size:13px;line-height:13px;color:#444;font-weight:400;transform:scaleX(0.9042);transform-origin:0 0;">ιανουάριος 2021 Μάρτιος 2021</div>
<div class="a" style="left:18.20px;top:31.25px;font-size:13.5px;line-height:13.5px;color:#fff;font-weight:400;transform:scaleX(0.7999);transform-origin:0 0;">FILE</div>
<div class="a" style="left:75.63px;top:31.25px;font-size:13.5px;line-height:13.5px;color:#444;font-weight:400;transform:scaleX(0.8735);transform-origin:0 0;">HOME</div>
<div class="a" style="left:139.25px;top:31.25px;font-size:13.5px;line-height:13.5px;color:#444;font-weight:400;transform:scaleX(0.7498);transform-origin:0 0;">INSERT</div>
<div class="a" style="left:204.19px;top:31.25px;font-size:13.5px;line-height:13.5px;color:#444;font-weight:400;transform:scaleX(0.8150);transform-origin:0 0;">PAGE LAYOUT</div>
<div class="a" style="left:307.59px;top:31.25px;font-size:13.5px;line-height:13.5px;color:#444;font-weight:400;transform:scaleX(0.8135);transform-origin:0 0;">FORMULAS</div>
<div class="a" style="left:397.16px;top:31.25px;font-size:13.5px;line-height:13.5px;color:#444;font-weight:400;transform:scaleX(0.8425);transform-origin:0 0;">DATA</div>
<div class="a" style="left:454.24px;top:31.25px;font-size:13.5px;line-height:13.5px;color:#444;font-weight:400;transform:scaleX(0.7579);transform-origin:0 0;">REVIEW</div>
<div class="a" style="left:523.60px;top:31.25px;font-size:13.5px;line-height:13.5px;color:#444;font-weight:400;transform:scaleX(0.7854);transform-origin:0 0;">VIEW</div>
<div class="a" style="left:580.40px;top:31.25px;font-size:13.5px;line-height:13.5px;color:#444;font-weight:400;transform:scaleX(0.7656);transform-origin:0 0;">OFFICE TAB</div>
<div class="a" style="left:38.68px;top:65.25px;font-size:13.5px;line-height:13.5px;color:#444;font-weight:400;transform:scaleX(0.8156);transform-origin:0 0;text-shadow:0.25px 0 0 #444;">PROTECTED VIEW</div>
<div class="a" style="left:145.59px;top:65.31px;font-size:13px;line-height:13px;color:#444;font-weight:400;transform:scaleX(0.9098);transform-origin:0 0;text-decoration:underline;">Be careful—files from the Internet can contain viruses. Unless you need to edit, it's safer to stay in Protected View.</div>
<div class="a" style="left:779.10px;top:65.11px;font-size:13px;line-height:13px;color:#444;font-weight:400;transform:scaleX(0.9043);transform-origin:0 0;">Enable Editing</div>
<div class="a" style="left:11.84px;top:103.18px;font-size:14px;line-height:14px;color:#444;font-weight:400;transform:scaleX(0.9641);transform-origin:0 0;">M14</div>
<div class="a" style="left:25.50px;top:141.88px;font-size:12.5px;line-height:12.5px;color:#333;font-weight:700;transform:scaleX(0.9545);transform-origin:0 0;text-shadow:0.25px 0 0 #333;">STATISTIKO_ARXEIO_LHKS_PRAKSEWN-20210401</div>
<div class="a" style="left:326.80px;top:141.88px;font-size:12.5px;line-height:12.5px;color:#333;font-weight:700;transform:scaleX(1.0366);transform-origin:0 0;text-shadow:0.25px 0 0 #333;">θανατοι γεννήσεις</div>
<div class="a" style="left:447.50px;top:141.88px;font-size:12.5px;line-height:12.5px;color:#333;font-weight:700;transform:scaleX(1.0454);transform-origin:0 0;text-shadow:0.25px 0 0 #333;">ιανουάριος 2021 Μάρτιος 2021</div>
<div class="a" style="left:646.00px;top:141.88px;font-size:12.5px;line-height:12.5px;color:#333;font-weight:700;transform:scaleX(1.0333);transform-origin:0 0;text-shadow:0.25px 0 0 #333;">[Protected View]</div>
<div class="a" style="left:118.00px;top:817.25px;font-size:13.5px;line-height:13.5px;color:#444;font-weight:400;transform:scaleX(0.9067);transform-origin:0 0;">ΣΤΑΤ.ΣΤ.ΛΗΞ.ΠΡ.2018</div>
<div class="a" style="left:277.00px;top:817.25px;font-size:13.5px;line-height:13.5px;color:#222;font-weight:400;transform:scaleX(0.9104);transform-origin:0 0;">ΣΤΑΤ.ΣΤ.ΛΗΞ.ΠΡ.2019</div>
<div class="a" style="left:436.00px;top:817.25px;font-size:13.5px;line-height:13.5px;color:#f5e6e6;font-weight:400;transform:scaleX(0.9067);transform-origin:0 0;">ΣΤΑΤ.ΣΤ.ΛΗΞ.ΠΡ.2020</div>
<div class="a" style="left:589.00px;top:816.75px;font-size:13.5px;line-height:13.5px;color:#217346;font-weight:700;transform:scaleX(0.9882);transform-origin:0 0;text-shadow:0.2px 0 0 #217346;">ΣΤΑΤ.ΣΤ.ΛΗΞ.ΠΡ.2021</div>
<div class="a" style="left:390px;top:770px;width:102px;height:42px;border:5px solid #ff0000;border-radius:12px"></div>
</body></html>
